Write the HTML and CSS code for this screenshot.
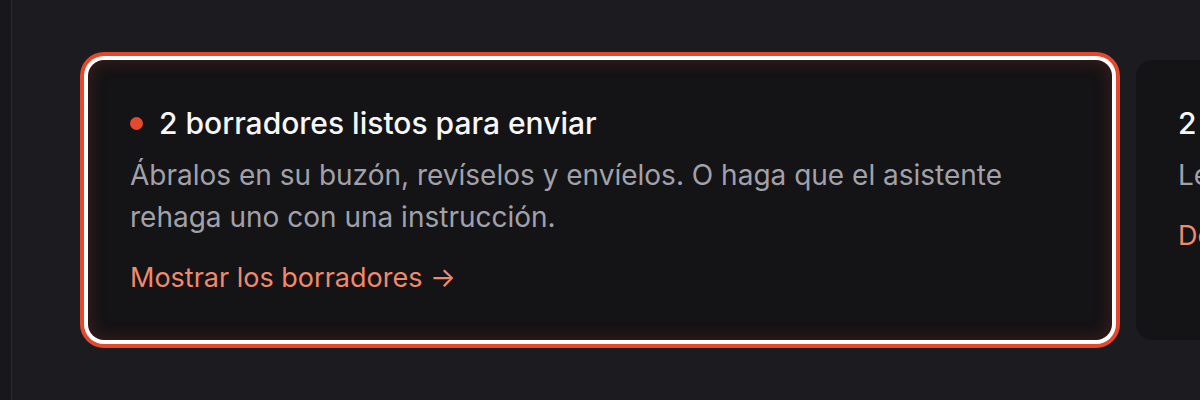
FILE: index.html
```html
<!DOCTYPE html>
<html lang="es">
<head>
    <meta charset="UTF-8">
    <meta name="viewport" content="width=device-width, initial-scale=1.0">
    <link rel="stylesheet" href="styles.css">
    <title>Borradores</title>
</head>
<body>
    <aside class="rail"></aside>
    <main class="main">
        <div class="cards">
            <div class="card active">
                <h3 class="card-title"><span class="dot"></span>2 borradores listos para enviar</h3>
                <p class="card-text">Ábralos en su buzón, revíselos y envíelos. O haga que el asistente rehaga uno con una instrucción.</p>
                <a class="card-link" href="#">Mostrar los borradores →</a>
            </div>
            <div class="card">
                <h3 class="card-title">2 recordatorios pendientes</h3>
                <p class="card-text">Le esperan dos tareas para hoy.</p>
                <a class="card-link" href="#">De un vistazo →</a>
            </div>
        </div>
    </main>
</body>
</html>
```

FILE: styles.css
```css
*{
    margin: 0;
    padding: 0;
    box-sizing: border-box;
}

body{
    display: flex;
    height: 400px;
    overflow: hidden;
    background: #1c1b20;
    font-family: Inter, "Noto Sans", sans-serif;
}

.rail{
    width: 12px;
    flex-shrink: 0;
    background: #18171b;
    border-right: 1px solid #2c2b30;
}

.main{
    flex: 1;
    padding: 60px 0 0 76px;
    overflow: hidden;
}

.cards{
    display: flex;
    gap: 24px;
}

.card{
    width: 1024px;
    height: 280px;
    flex-shrink: 0;
    padding: 44px 42px 0;
    background: #141316;
    border-radius: 16px;
}

.card.active{
    box-shadow: 0 0 0 4px #ffffff, 0 0 0 8px #e5492d, inset 0 0 18px rgba(229, 73, 45, 0.22);
}

.card-title{
    display: flex;
    align-items: center;
    font-size: 30px;
    line-height: 38px;
    font-weight: 500;
    color: #f7f7f8;
}

.dot{
    width: 13px;
    height: 13px;
    border-radius: 50%;
    background: #e5492d;
    margin-right: 16px;
}

.card-text{
    margin-top: 12px;
    font-size: 28px;
    line-height: 42px;
    color: #a1a1aa;
    max-width: 920px;
}

.card-link{
    display: inline-block;
    margin-top: 22px;
    font-size: 27px;
    line-height: 36px;
    color: #f08a6c;
    text-decoration: none;
}
```
